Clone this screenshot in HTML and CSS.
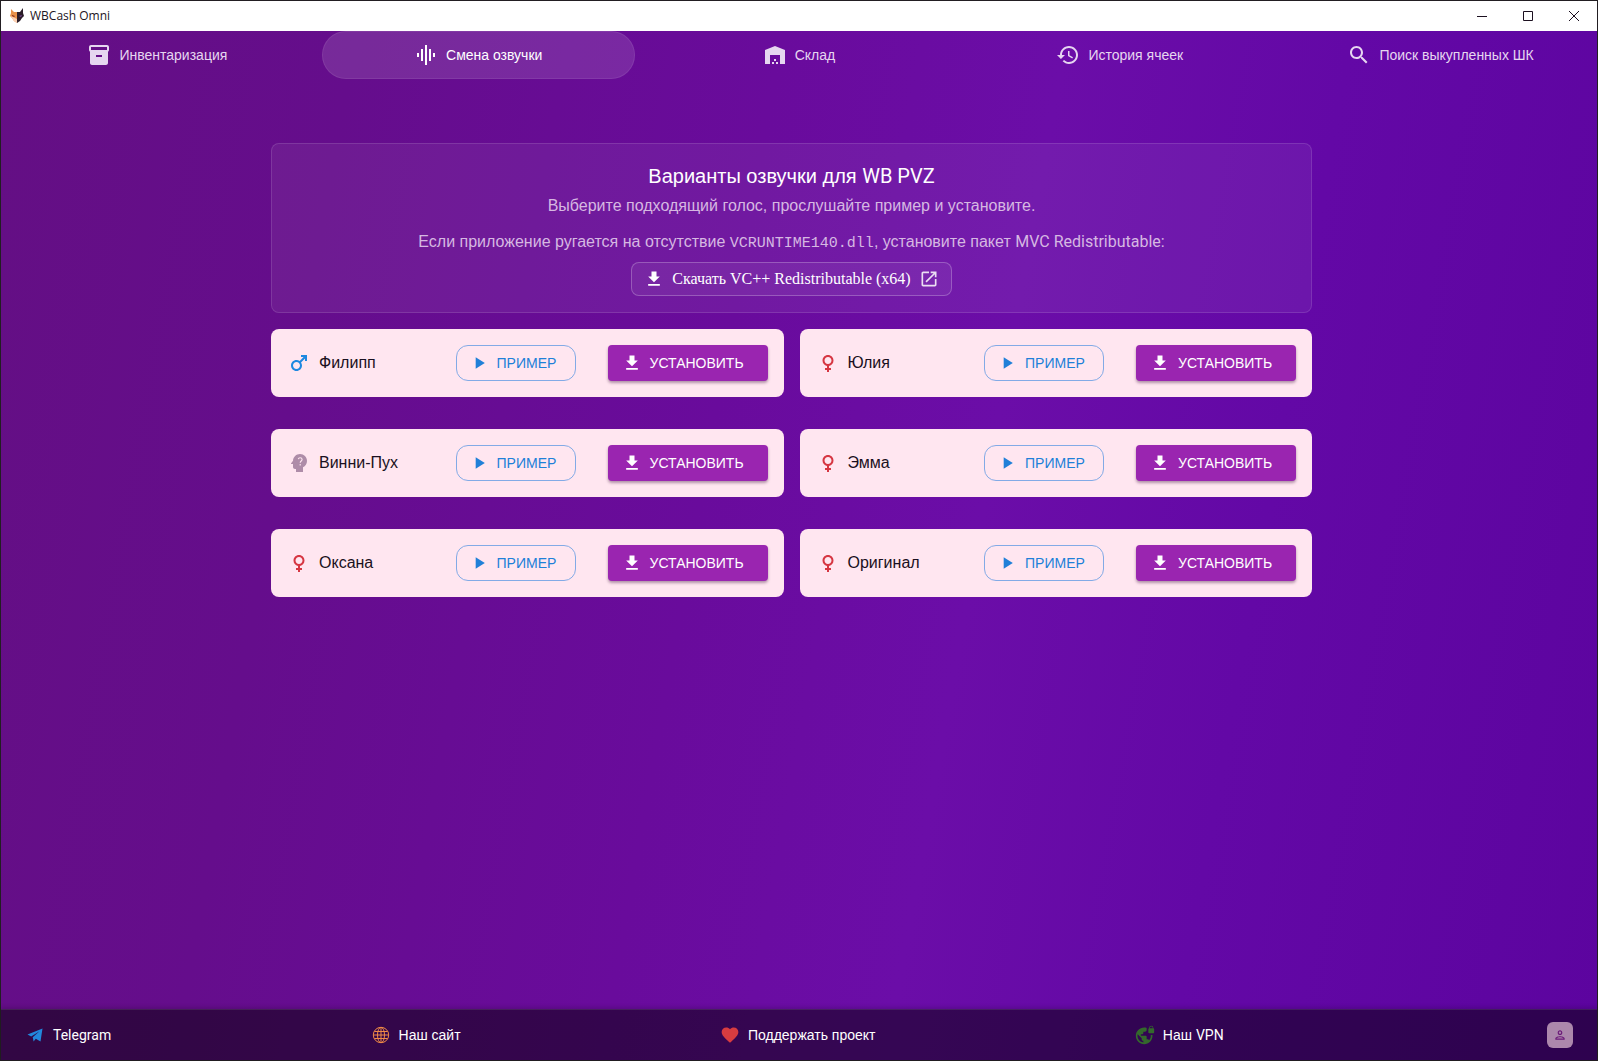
FILE: index.html
```html
<!DOCTYPE html>
<html lang="ru">
<head>
<meta charset="utf-8">
<meta name="viewport" content="width=device-width, initial-scale=1">
<title>WBCash Omni</title>
<link rel="stylesheet" href="styles.css">
</head>
<body>
<svg class="sprite" aria-hidden="true">
  <symbol id="i-download" viewBox="0 0 24 24"><path d="M19 9h-4V3H9v6H5l7 7 7-7zM5 18v2h14v-2H5z"/></symbol>
  <symbol id="i-play" viewBox="0 0 24 24"><path d="M8 5v14l11-7z"/></symbol>
  <symbol id="i-male" viewBox="0 0 24 24"><path d="M9.5 11c1.93 0 3.5 1.57 3.5 3.5S11.43 18 9.5 18 6 16.43 6 14.5 7.57 11 9.5 11zm0-2C6.46 9 4 11.46 4 14.5S6.46 20 9.5 20s5.5-2.46 5.5-5.5c0-1.16-.36-2.23-.97-3.12L18 7.42V10h2V4h-6v2h2.58l-3.97 3.97C11.73 9.36 10.66 9 9.5 9z"/></symbol>
  <symbol id="i-female" viewBox="0 0 24 24"><path d="M17.5 9.5C17.5 6.46 15.04 4 12 4S6.5 6.46 6.5 9.5c0 2.7 1.94 4.93 4.5 5.4V17H9v2h2v2h2v-2h2v-2h-2v-2.1c2.56-.47 4.5-2.7 4.5-5.4zm-9 0C8.5 7.57 10.07 6 12 6s3.5 1.57 3.5 3.5S13.93 13 12 13s-3.5-1.57-3.5-3.5z"/></symbol>
  <symbol id="i-mind" viewBox="0 0 24 24"><path d="M13 3C9.25 3 6.2 5.94 6.02 9.64L4.1 12.2c-.25.33-.01.8.4.8H6v3c0 1.1.9 2 2 2h1v3h7v-4.68c2.36-1.12 4-3.53 4-6.32 0-3.87-3.13-7-7-7z"/><path d="M11.2 8.2c.3-1 1-1.5 1.9-1.5 1.1 0 2 .8 2 1.8 0 1.5-1.9 1.6-1.9 3.3M13.2 13v1.4" fill="none" stroke="#ffe6f0" stroke-width="1.1"/></symbol>
</svg>
<div class="window">
  <header class="titlebar">
    <svg class="fox" viewBox="0 0 16 16" aria-hidden="true">
      <path d="M2 1l3 3h3v11l-3-2-2-3-2-2 1-3z" fill="#e8924a"/><path d="M1 8l3 1 4 2v4l-3-2-2-3z" fill="#fbd0b4"/>
      <path d="M14 0l-3 4H8v11l3-2 2-3 2-2-1-3z" fill="#2a1c28"/><path d="M3 7l3 1-1 1-2-1z" fill="#8c2d1c"/><path d="M10 8l3-1-1 2z" fill="#7b4a9a"/>
    </svg>
    <span class="app-name">WBCash Omni</span>
    <button class="win-btn" aria-label="Свернуть"><svg viewBox="0 0 10 10"><path d="M0 5.5h10"/></svg></button>
    <button class="win-btn" aria-label="Развернуть"><svg viewBox="0 0 10 10"><path d="M.5.5h9v9h-9z"/></svg></button>
    <button class="win-btn" aria-label="Закрыть"><svg viewBox="0 0 10 10"><path d="M0 0l10 10M10 0L0 10"/></svg></button>
  </header>
  <div class="app">
    <nav class="tabs">
      <a class="tab" href="#inventory"><svg class="icon" viewBox="0 0 24 24"><path d="M20 2H4c-1 0-2 .9-2 2v3.01c0 .72.43 1.34 1 1.69V20c0 1.1 1.1 2 2 2h14c.9 0 2-.9 2-2V8.7c.57-.35 1-.97 1-1.69V4c0-1.1-1-2-2-2zm-5 12H9v-2h6v2zm5-7H4V4h16v3z"/></svg>Инвентаризация</a>
      <a class="tab active" href="#voice" aria-current="page"><svg class="icon" viewBox="0 0 24 24"><path d="M7 18h2V6H7v12zm4 4h2V2h-2v20zm-8-8h2v-4H3v4zm12 4h2V6h-2v12zm4-8v4h2v-4h-2z"/></svg>Смена озвучки</a>
      <a class="tab" href="#warehouse"><svg class="icon" viewBox="0 0 24 24"><path d="M22 21V7l-10-4L2 7v14h5v-9h10v9h5zm-11-2H9v2h2v-2zm2-3h-2v2h2v-2zm2 3h-2v2h2v-2z"/></svg>Склад</a>
      <a class="tab" href="#history"><svg class="icon" viewBox="0 0 24 24"><path d="M13 3c-4.97 0-9 4.03-9 9H1l3.89 3.89.07.14L9 12H6c0-3.87 3.13-7 7-7s7 3.13 7 7-3.13 7-7 7c-1.93 0-3.68-.79-4.94-2.06l-1.42 1.42C8.27 19.99 10.51 21 13 21c4.97 0 9-4.03 9-9s-4.03-9-9-9zm-1 5v5l4.28 2.54.72-1.21-3.5-2.08V8H12z"/></svg>История ячеек</a>
      <a class="tab" href="#search"><svg class="icon" viewBox="0 0 24 24"><path d="M15.5 14h-.79l-.28-.27C15.41 12.59 16 11.11 16 9.5 16 5.91 13.09 3 9.5 3S3 5.91 3 9.5 5.91 16 9.5 16c1.61 0 3.09-.59 4.23-1.57l.27.28v.79l5 4.99L20.49 19l-4.99-5zm-6 0C7.01 14 5 11.99 5 9.5S7.01 5 9.5 5 14 7.01 14 9.5 11.99 14 9.5 14z"/></svg>Поиск выкупленных ШК</a>
    </nav>
    <main class="main">
      <div class="content">
        <section class="intro">
          <h1 class="intro-title">Варианты озвучки для <span class="latin">WB PVZ</span></h1>
          <p class="intro-text">Выберите подходящий голос, прослушайте пример и установите.</p>
          <p class="intro-text note">Если приложение ругается на отсутствие <code class="code">VCRUNTIME140.dll</code>, установите пакет <span class="latin">MVC Redistributable:</span></p>
          <a class="redist" href="#redist"><svg class="icon-sm"><use href="#i-download"/></svg>Скачать VC++ Redistributable (x64)<svg class="icon-sm dim" viewBox="0 0 24 24"><path d="M19 19H5V5h7V3H5c-1.11 0-2 .9-2 2v14c0 1.1.89 2 2 2h14c1.1 0 2-.9 2-2v-7h-2v7zM14 3v2h3.59l-9.83 9.83 1.41 1.41L19 6.41V10h2V3h-7z"/></svg></a>
        </section>
        <section class="voices">
          <article class="voice"><svg class="icon male"><use href="#i-male"/></svg><h2 class="voice-name">Филипп</h2><button class="btn sample"><svg class="icon-sm"><use href="#i-play"/></svg>Пример</button><button class="btn install"><svg class="icon-sm"><use href="#i-download"/></svg>Установить</button></article>
          <article class="voice"><svg class="icon female"><use href="#i-female"/></svg><h2 class="voice-name">Юлия</h2><button class="btn sample"><svg class="icon-sm"><use href="#i-play"/></svg>Пример</button><button class="btn install"><svg class="icon-sm"><use href="#i-download"/></svg>Установить</button></article>
          <article class="voice"><svg class="icon mind"><use href="#i-mind"/></svg><h2 class="voice-name">Винни-Пух</h2><button class="btn sample"><svg class="icon-sm"><use href="#i-play"/></svg>Пример</button><button class="btn install"><svg class="icon-sm"><use href="#i-download"/></svg>Установить</button></article>
          <article class="voice"><svg class="icon female"><use href="#i-female"/></svg><h2 class="voice-name">Эмма</h2><button class="btn sample"><svg class="icon-sm"><use href="#i-play"/></svg>Пример</button><button class="btn install"><svg class="icon-sm"><use href="#i-download"/></svg>Установить</button></article>
          <article class="voice"><svg class="icon female"><use href="#i-female"/></svg><h2 class="voice-name">Оксана</h2><button class="btn sample"><svg class="icon-sm"><use href="#i-play"/></svg>Пример</button><button class="btn install"><svg class="icon-sm"><use href="#i-download"/></svg>Установить</button></article>
          <article class="voice"><svg class="icon female"><use href="#i-female"/></svg><h2 class="voice-name">Оригинал</h2><button class="btn sample"><svg class="icon-sm"><use href="#i-play"/></svg>Пример</button><button class="btn install"><svg class="icon-sm"><use href="#i-download"/></svg>Установить</button></article>
        </section>
      </div>
    </main>
    <footer class="footer">
      <a class="foot-link" href="#telegram"><svg class="icon-sm telegram" viewBox="0 0 20 20"><path d="M2.5 9.6L17.5 3.5 15.5 16.5 10.8 13.8 8.6 16.6 7.7 12.3 14.5 6.2 6.2 11.5z"/></svg><span class="latin">Telegram</span></a>
      <a class="foot-link" href="#site"><svg class="icon-sm site" viewBox="0 0 20 20"><circle cx="10" cy="10" r="7.7"/><ellipse cx="10" cy="10" rx="3.5" ry="7.7"/><path d="M10 2.5v15M2.5 10h15M3.5 6.5h13M3.5 13.5h13"/></svg>Наш сайт</a>
      <a class="foot-link" href="#donate"><svg class="icon-sm heart" viewBox="0 0 24 24"><path d="M12 21.35l-1.45-1.32C5.4 15.36 2 12.28 2 8.5 2 5.42 4.42 3 7.5 3c1.74 0 3.41.81 4.5 2.09C13.09 3.81 14.76 3 16.5 3 19.58 3 22 5.42 22 8.5c0 3.78-3.4 6.86-8.55 11.54L12 21.35z"/></svg>Поддержать проект</a>
      <a class="foot-link" href="#vpn"><svg class="icon-sm vpn" viewBox="0 0 24 24"><path d="M22 4v-.5C22 2.12 20.88 1 19.5 1S17 2.12 17 3.5V4c-.55 0-1 .45-1 1v4c0 .55.45 1 1 1h5c.55 0 1-.45 1-1V5c0-.55-.45-1-1-1zm-.8 0h-3.4v-.5c0-.94.76-1.7 1.7-1.7s1.7.76 1.7 1.7V4zm-2.28 8c.04.33.08.66.08 1 0 2.08-.8 3.97-2.1 5.39-.26-.81-1-1.39-1.9-1.39h-1v-3c0-.55-.45-1-1-1H7v-2h2c.55 0 1-.45 1-1V8h2c1.1 0 2-.9 2-2V3.46c-.95-.3-1.95-.46-3-.46C5.48 3 1 7.48 1 13s4.48 10 10 10 10-4.48 10-10c0-.34-.02-.67-.05-1h-2.03zM10 20.93c-3.95-.49-7-3.85-7-7.93 0-.62.08-1.21.21-1.79L8 16v1c0 1.1.9 2 2 2v1.93z"/></svg><span>Наш <span class="latin">VPN</span></span></a>
      <div class="account"><button class="account-btn" aria-label="Аккаунт"><svg viewBox="0 0 24 24"><path d="M12 6c1.1 0 2 .9 2 2s-.9 2-2 2-2-.9-2-2 .9-2 2-2m0 10c2.7 0 5.8 1.29 6 2H6c.23-.72 3.31-2 6-2m0-12C9.79 4 8 5.79 8 8s1.79 4 4 4 4-1.79 4-4-1.79-4-4-4zm0 10c-2.67 0-8 1.34-8 4v2h16v-2c0-2.66-5.33-4-8-4z"/></svg></button></div>
    </footer>
  </div>
</div>
</body>
</html>
```

FILE: styles.css
```css
* { box-sizing: border-box; }

body {
  margin: 0;
  font-family: "Liberation Sans", Arial, sans-serif;
  color: #fff;
}

a { color: inherit; text-decoration: none; }
button { font-family: inherit; cursor: pointer; }
h1, h2, p { margin: 0; }

.sprite { display: none; }
.latin { font-family: Roboto, sans-serif; }
.icon, .icon-sm { flex: none; fill: currentColor; }
.icon { width: 24px; height: 24px; }
.icon-sm { width: 20px; height: 20px; }

.window {
  display: flex;
  flex-direction: column;
  min-height: 100vh;
  border: 1px solid #221e22;
}

.titlebar {
  display: flex;
  align-items: center;
  height: 30px;
  padding-left: 8px;
  background: #fff;
  color: #1c1424;
}
.fox { width: 16px; height: 16px; }
.app-name {
  flex: 1;
  margin-left: 5px;
  font: 12px/16px "Open Sans", sans-serif;
}
.win-btn {
  display: grid;
  place-items: center;
  width: 46px;
  height: 30px;
  padding: 0;
  border: 0;
  background: none;
}
.win-btn svg {
  width: 10px;
  height: 10px;
  fill: none;
  stroke: #1c1020;
}

.app {
  flex: 1;
  display: flex;
  flex-direction: column;
  background: linear-gradient(100deg, #640f84 0%, #650d8c 20%, #690b9c 44%, #6b0da8 60%, #6308a6 76%, #5c049f 100%);
}

.tabs {
  display: grid;
  grid-template-columns: repeat(5, 1fr);
  gap: 8px;
}
.tab {
  display: flex;
  align-items: center;
  justify-content: center;
  gap: 8px;
  height: 48px;
  border: 1px solid transparent;
  border-radius: 24px;
  font-size: 14px;
  color: #e6d6f0;
}
.tab.active {
  color: #fff;
  background: rgba(255, 255, 255, 0.12);
  border-color: rgba(255, 255, 255, 0.08);
}

.main {
  flex: 1;
  padding: 64px 31px 64px 16px;
}
.content {
  max-width: 1041px;
  margin: 0 auto;
}

.intro {
  display: flex;
  flex-direction: column;
  align-items: center;
  padding: 16px;
  border: 1px solid rgba(255, 255, 255, 0.12);
  border-radius: 8px;
  background: rgba(255, 255, 255, 0.06);
  text-align: center;
}
.intro-title {
  margin-bottom: 2px;
  font-size: 20px;
  font-weight: 400;
  line-height: 32px;
}
.intro-text {
  font-size: 16px;
  line-height: 24px;
  color: #d6b8e2;
}
.note { margin-top: 12px; }
.code {
  font: 15px/20px "Liberation Mono", monospace;
}
.redist {
  display: flex;
  align-items: center;
  gap: 8px;
  height: 34px;
  margin-top: 8px;
  padding: 0 12px;
  border: 1px solid rgba(255, 255, 255, 0.24);
  border-radius: 8px;
  background: rgba(255, 255, 255, 0.06);
  font: 16px/24px "Liberation Serif", serif;
}
.dim { opacity: 0.85; }

.voices {
  display: grid;
  grid-template-columns: 1fr 1fr;
  gap: 32px 16px;
  margin-top: 16px;
}
.voice {
  display: flex;
  align-items: center;
  padding: 16px;
  border-radius: 8px;
  background: #ffe6f0;
  color: #1a1020;
}
.voice-name {
  flex: 1;
  margin-left: 8px;
  font-size: 16px;
  font-weight: 400;
  line-height: 24px;
}
.male { color: #1e88e0; }
.female { color: #d63642; }
.mind { color: #ae8ca8; }

.btn {
  display: flex;
  align-items: center;
  gap: 8px;
  height: 36px;
  font-size: 14px;
  line-height: 24px;
  text-transform: uppercase;
}
.sample {
  min-width: 120px;
  padding: 0 12px;
  border: 1px solid #82aae6;
  border-radius: 12px;
  background: none;
  color: #2080d8;
}
.install {
  min-width: 160px;
  margin-left: 32px;
  padding: 0 14px;
  border: 0;
  border-radius: 4px;
  background: #9a25b0;
  color: #fff;
  box-shadow: 0 2px 3px rgba(60, 20, 60, 0.4);
}

.footer {
  display: flex;
  align-items: center;
  justify-content: space-between;
  height: 51px;
  padding: 0 24px;
  border-top: 1px solid rgba(255, 255, 255, 0.1);
  background: rgba(0, 0, 0, 0.5);
  box-shadow: 0 -2px 4px rgba(0, 0, 0, 0.15);
}
.foot-link {
  display: flex;
  align-items: center;
  gap: 8px;
  font-size: 14px;
  line-height: 20px;
}
.telegram { color: #2288dc; }
.site { fill: none; stroke: #f08a46; }
.heart { color: #d83c40; }
.vpn { color: #34682c; }
.account { padding-left: 64px; }
.account-btn {
  display: grid;
  place-items: center;
  width: 26px;
  height: 26px;
  padding: 0;
  border: 0;
  border-radius: 6px;
  background: #ac88ac;
}
.account-btn svg {
  width: 14px;
  height: 14px;
  fill: #6a1878;
}
```
